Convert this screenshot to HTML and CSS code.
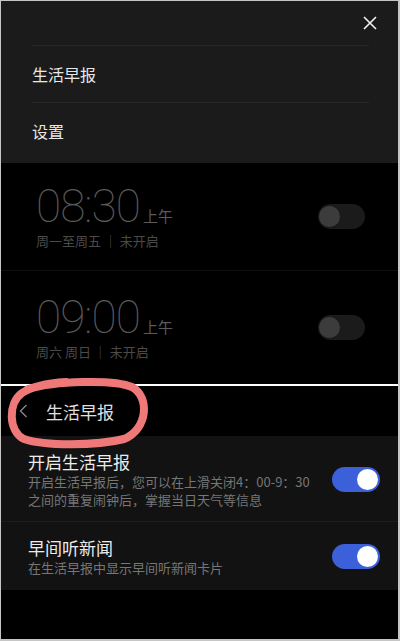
FILE: index.html
```html
<!DOCTYPE html>
<html lang="zh-CN">
<head>
    <meta charset="UTF-8">
    <meta name="viewport" content="width=device-width, initial-scale=1.0">
    <title>闹钟</title>
    <link rel="stylesheet" href="styles.css">
</head>
<body>
    <div class="screen">
        <div class="menu-panel">
            <div class="close-row">
                <svg class="close-icon" width="14" height="14" viewBox="0 0 14 14">
                    <path d="M1 1 L13 13 M13 1 L1 13" stroke="#f2f2f2" stroke-width="1.6" fill="none"/>
                </svg>
            </div>
            <div class="menu-list">
                <div class="menu-item">生活早报</div>
                <div class="menu-item">设置</div>
            </div>
        </div>

        <div class="alarm">
            <div class="alarm-info">
                <div class="time-line"><span class="digits">08:30</span><span class="ampm">上午</span></div>
                <div class="alarm-sub">周一至周五 ｜ 未开启</div>
            </div>
            <div class="switch"></div>
        </div>
        <div class="alarm">
            <div class="alarm-info">
                <div class="time-line"><span class="digits">09:00</span><span class="ampm">上午</span></div>
                <div class="alarm-sub">周六 周日 ｜ 未开启</div>
            </div>
            <div class="switch"></div>
        </div>

        <div class="split"></div>

        <div class="sub-header">
            <svg class="back-icon" width="9" height="14" viewBox="0 0 9 14">
                <path d="M7.5 1 L1.5 7 L7.5 13" stroke="#8a8a8a" stroke-width="1.3" fill="none"/>
            </svg>
            <span class="sub-title">生活早报</span>
        </div>

        <div class="settings">
            <div class="setting">
                <div class="setting-text">
                    <div class="setting-title">开启生活早报</div>
                    <div class="setting-desc">开启生活早报后，您可以在上滑关闭4：00-9：30之间的重复闹钟后，掌握当日天气等信息</div>
                </div>
                <div class="switch on"></div>
            </div>
            <div class="setting">
                <div class="setting-text">
                    <div class="setting-title">早间听新闻</div>
                    <div class="setting-desc">在生活早报中显示早间听新闻卡片</div>
                </div>
                <div class="switch on"></div>
            </div>
        </div>

        <!-- circled header mark -->
        <svg class="mark" width="150" height="80" viewBox="0 0 150 80">
            <path d="M24 16 C50 8 110 6 128 14 C146 24 144 56 120 66 C92 73 40 73 20 66 C4 58 4 30 18 20 C30 12 46 10 62 9"
                  stroke="#ef7979" stroke-width="8" fill="none" stroke-linecap="round"/>
        </svg>
    </div>
</body>
</html>
```

FILE: styles.css
```css
* { box-sizing: border-box; }
body {
    margin: 0;
    background: #c6c6c6;
    font-family: "Noto Sans CJK SC", "Noto Sans", sans-serif;
}
.screen {
    position: relative;
    width: 400px;
    height: 641px;
    border: 1px solid #c6c6c6;
    border-width: 1px 2px 2px 1px;
    background: #000;
    overflow: hidden;
}

/* top menu */
.menu-panel {
    background: #1b1b1b;
    height: 162px;
}
.close-row {
    height: 44px;
    display: flex;
    justify-content: flex-end;
    align-items: center;
    padding-right: 21px;
}
.menu-list { padding: 0 29px 0 31px; }
.menu-item {
    border-top: 1px solid #272727;
    height: 57px;
    display: flex;
    align-items: center;
    color: #e8e8e8;
    font-size: 16px;
}

/* alarms */
.alarm {
    display: flex;
    align-items: center;
    justify-content: space-between;
    padding: 20px 33px 21px 35px;
    border-bottom: 1px solid #0f0f0f;
}
.alarm + .alarm { padding: 23px 33px 24px 35px; border-bottom: none; }
.time-line { display: flex; align-items: baseline; }
.digits {
    font-family: Roboto, "Noto Sans", sans-serif;
    font-weight: 100;
    font-size: 46px;
    line-height: 46px;
    color: #5a5a5a;
    letter-spacing: -1px;
}
.ampm {
    font-size: 15px;
    color: #5a5a5a;
    margin-left: 3px;
}
.alarm-sub {
    margin-top: 3px;
    font-size: 13px;
    line-height: 17px;
    color: #4a4a4a;
}

.switch {
    position: relative;
    width: 47px;
    height: 25px;
    border-radius: 13px;
    background: #1b1b1b;
    flex-shrink: 0;
}
.switch::after {
    content: "";
    position: absolute;
    left: 1px;
    top: 2px;
    width: 21px;
    height: 21px;
    border-radius: 50%;
    background: #3c3c3c;
}
.switch.on { width: 48px; background: #3b60d9; }
.switch.on::after { left: auto; right: 2px; background: #fff; }

.split { height: 2px; background: #fff; }

/* sub page header */
.sub-header {
    height: 50px;
    display: flex;
    align-items: center;
    padding-left: 18px;
}
.sub-title {
    margin-left: 18px;
    font-size: 17px;
    color: #e0e0e0;
}

/* settings card */
.settings { background: #121212; }
.setting {
    display: flex;
    align-items: center;
    padding: 14px 18px 12px 27px;
}
.setting + .setting {
    border-top: 1px solid #1d1d1d;
    padding-bottom: 13px;
}
.setting-text { flex: 1; }
.setting-title {
    font-size: 17px;
    line-height: 23px;
    color: #ececec;
}
.setting-desc {
    max-width: 286px;
    font-size: 13px;
    line-height: 18px;
    color: #767676;
}

.mark {
    position: absolute;
    left: 3px;
    top: 372px;
}
```
